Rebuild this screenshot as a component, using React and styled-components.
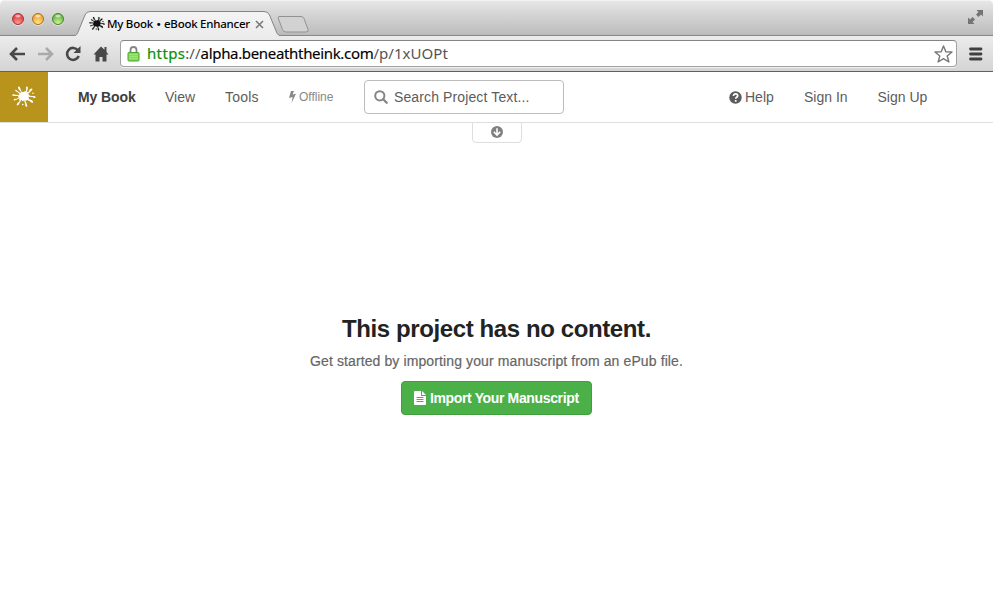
import React from "react";
import styled, { createGlobalStyle } from "styled-components";

const GlobalStyle = createGlobalStyle`
  * { box-sizing: border-box; }
  html, body { margin: 0; background: #fff; overflow: hidden; }
`;

const Window = styled.div`
  width: 993px;
  height: 609px;
  display: flex;
  flex-direction: column;
  overflow: hidden;
  background: #fff;
  font-family: "Liberation Sans", Arial, sans-serif;
  border-radius: 5px 5px 0 0;
`;

const TabStrip = styled.div`
  height: 36px;
  flex: none;
  display: flex;
  align-items: flex-start;
  background: linear-gradient(#e8e8e8 0, #dadada 10px, #bdbdbd 34px, #b4b4b4 35px);
  box-shadow: inset 0 -1px #898989, inset 0 1px #f2f2f2;
`;

const Lights = styled.div`
  display: flex;
  gap: 8px;
  padding: 13px 0 0 12px;
  width: 72px;
`;

const Light = styled.span`
  width: 12px;
  height: 12px;
  border-radius: 50%;
  border: 1px solid ${(p) => p.$edge};
  background:
    radial-gradient(ellipse 4px 2px at 50% 20%, rgba(255, 255, 255, 0.9), transparent),
    radial-gradient(circle at 50% 90%, ${(p) => p.$glow}, ${(p) => p.$color} 75%);
  box-shadow: 0 1px rgba(255, 255, 255, 0.5);
`;

const Tab = styled.div`
  position: relative;
  width: 204px;
  height: 36px;
  display: flex;
  align-items: center;
  padding: 12px 0 0 17px;
`;

const TabShape = styled.svg`
  position: absolute;
  inset: 0;
`;

const TabTitle = styled.span`
  position: relative;
  margin-left: 2px;
  width: 143px;
  white-space: nowrap;
  font: 500 11.5px/16px "Noto Sans", "Open Sans", sans-serif;
  letter-spacing: -0.25px;
  color: #000;
`;

const Bullet = styled.span`
  font-family: "DejaVu Sans", sans-serif;
  font-size: 10px;
`;

const Icon = styled.svg`
  position: relative;
  flex: none;
  display: block;
  margin-left: ${(p) => p.$left || 0}px;
  margin-top: ${(p) => p.$top || 0}px;
`;

const Toolbar = styled.div`
  height: 36px;
  flex: none;
  display: flex;
  align-items: center;
  padding: 0 10px 0 9px;
  background: linear-gradient(#ececec, #d4d4d4);
  border-bottom: 1px solid #626066;
`;

const AddressBar = styled.div`
  width: 837px;
  height: 27px;
  margin: 0 0 0 11px;
  padding: 0 3px 0 6px;
  display: flex;
  align-items: center;
  background: #fff;
  border: 1px solid #a0a0a0;
  border-top-color: #858585;
  border-radius: 4px;
  box-shadow: 0 1px #f1f1f1;
`;

const Url = styled.div`
  flex: 1;
  margin: -1px 0 0 7px;
  padding-bottom: 1px;
  white-space: nowrap;
  font: 15px/24px "Noto Sans", "Open Sans", sans-serif;
  letter-spacing: 0.05px;
  color: #555;
`;

const Scheme = styled.span`
  color: #0a910a;
  -webkit-text-stroke: 0.2px #0a910a;
  letter-spacing: 0.35px;
`;

const Host = styled.span`
  color: #000;
  -webkit-text-stroke: 0.15px #000;
  letter-spacing: -0.33px;
`;

const Navbar = styled.nav`
  height: 51px;
  flex: none;
  display: flex;
  align-items: center;
  border-bottom: 1px solid #dedede;
`;

const Brand = styled.div`
  width: 48px;
  height: 50px;
  margin-right: 30px;
  display: flex;
  align-items: center;
  justify-content: center;
  background: #b8941d;
`;

const NavItem = styled.span`
  width: ${(p) => p.$w}px;
  margin-right: 30px;
  display: flex;
  align-items: center;
  gap: 3px;
  white-space: nowrap;
  font-size: ${(p) => (p.$small ? 12 : 14)}px;
  font-weight: ${(p) => (p.$strong ? 700 : 400)};
  line-height: 20px;
  letter-spacing: ${(p) => p.$spacing || 0}px;
  color: ${(p) => (p.$strong ? "#404040" : p.$small ? "#888" : "#5c5c5c")};
`;

const SearchBox = styled.div`
  width: 200px;
  height: 34px;
  padding-left: 9px;
  display: flex;
  align-items: center;
  gap: 6px;
  margin-right: 165px;
  border: 1px solid #bdbdbd;
  border-radius: 4px;
  font-size: 14px;
  letter-spacing: 0.12px;
  color: #5c5c5c;
`;

const PullTab = styled.div`
  width: 50px;
  height: 21px;
  flex: none;
  margin: -1px 0 0 472px;
  display: flex;
  justify-content: center;
  padding: 4px 1px 0 0;
  background: #fff;
  border: 1px solid #dedede;
  border-radius: 0 0 4px 4px;
`;

const Empty = styled.main`
  display: flex;
  flex-direction: column;
  align-items: center;
  padding-top: 172px;
`;

const Heading = styled.h1`
  margin: 0;
  font-size: 24px;
  line-height: 28px;
  font-weight: 700;
  letter-spacing: -0.4px;
  color: #222;
  white-space: nowrap;
`;

const Lead = styled.p`
  margin: 8px 0 10px;
  font-size: 14px;
  line-height: 20px;
  letter-spacing: 0.11px;
  color: #666;
  -webkit-text-stroke: 0.2px #666;
  white-space: nowrap;
`;

const ImportButton = styled.button`
  width: 191px;
  height: 34px;
  padding: 0 0 0 12px;
  display: flex;
  align-items: center;
  gap: 4px;
  border: 1px solid #3fa03d;
  border-radius: 4px;
  background: #4bb047;
  color: #fff;
  font: 700 14px/20px "Liberation Sans", Arial, sans-serif;
  letter-spacing: -0.36px;
  white-space: nowrap;
`;

function Splat({ size, color, heavy }) {
  return (
    <Icon width={size} height={size} viewBox="0 0 24 24" fill={color} stroke={color} strokeWidth={heavy ? 0.3 : 0}>
      <path d="M7.500 8.500 9.600 6.800 11.500 6.900 13.200 6 14 7.200 16.200 6.700 16 9 17.800 10.300 16.500 11.800 17 14 15 14.400 14.300 16 12.600 15.200 10.500 16.300 9.500 15 7.200 15.500 7.400 13.300 5.800 12 7 10.800Z" />
      <path d="M10 8 8.400 3.700Q7.800 1.200 6.600 1.500T6.500 4.300ZM13.500 7 14.200 4.300Q13.300 1.800 14.800 1.600T15.700 4.500L14.500 7.500ZM15.500 8.500 17.200 5.800Q17.200 3.800 19.500 3.600T18.800 6.400L16 9ZM16.500 10.800 20.500 11Q23.700 10.600 23.600 12.200T20.300 12L16.500 11.700ZM15.500 13.500 18 14.400Q21.500 15.500 21 17.200T18.200 16.400L14.500 14.500ZM13 15 14.500 18.500Q16 21.700 14.500 21.800T13.200 18.500L12 15.500ZM9.500 14.500 7.600 18Q6.300 21.200 5 20.300T6.800 17L8.500 14.500ZM8.500 12.800 4.500 14.800Q2 16.200 1.700 14.900T4.300 13.900L7.500 12ZM7.500 10.700 3.500 10.900Q.3 11.500.2 10.100T3.500 9.700L8 10ZM8.500 9.500 5.200 7Q2.500 6.100 3.200 5.100T5.800 6.300L9 8.500Z" />
      <circle cx="10.800" cy="19.500" r=".8" /><circle cx="21" cy="8.200" r=".8" />
    </Icon>
  );
}

function Arrow({ flip, color, left }) {
  return (
    <Icon $left={left} width="17" height="16" viewBox="0 0 17 16" fill="none" stroke={color} strokeWidth="2.6">
      <path d={flip ? "M1 8h13M9 2l6 6-6 6" : "M16 8H3M8 2 2 8l6 6"} />
    </Icon>
  );
}

export default function App() {
  return (
    <>
      <GlobalStyle />
      <Window>
        <TabStrip>
          <Lights>
            <Light $color="#e0393e" $glow="#ff9a94" $edge="#a43336" />
            <Light $color="#eea22f" $glow="#ffe68a" $edge="#a9701f" />
            <Light $color="#67b443" $glow="#cbf794" $edge="#47832d" />
          </Lights>
          <Tab>
            <TabShape width="240" height="36" viewBox="0 0 240 36">
              <defs>
                <linearGradient id="tab" x2="0" y2="1">
                  <stop stopColor="#f4f4f4" /><stop offset="1" stopColor="#ececec" />
                </linearGradient>
              </defs>
              <path d="M0 36.500c4-.5 5-2 6-4.500l7-17q1.400-3.500 5-3.500h174q4 0 5.500 3.500l7 17c1 2.500 2.500 4 6 4.500" fill="url(#tab)" stroke="#858585" />
              <path d="M207 16.500h22q2 0 3 2l4 11q.8 2.500-2 2.500h-20q-2.500 0-3.500-2.500l-4-10.500q-.8-2.500.5-2.500Z" fill="#d2d2d2" stroke="#929292" />
            </TabShape>
            <Splat size={16} color="#111" heavy />
            <TabTitle>My Book <Bullet>•</Bullet> eBook Enhancer</TabTitle>
            <Icon $left={5} width="9" height="9" viewBox="0 0 9 9" stroke="#777" strokeWidth="1.500">
              <path d="m1 1 7 7m0-7-7 7" />
            </Icon>
          </Tab>
          <Icon $left={692} $top={10} width="16" height="15" viewBox="0 0 16 15" fill="#747474">
            <path d="M8.500 0H15v6.500l-2-2L10.500 7 8 4.500 10.500 2ZM0 7.500 2 9.500 4.500 7 7 9.500 4.500 12l2 2H0Z" />
          </Icon>
        </TabStrip>
        <Toolbar>
          <Arrow color="#484848" />
          <Arrow flip color="#aaa" left={11} />
          <Icon $left={11} width="16" height="16" viewBox="0 0 16 16">
            <path d="M13 4.500A6 6 0 1 0 13.700 10" fill="none" stroke="#484848" strokeWidth="2.600" />
            <path d="M15.500 0v7h-7Z" fill="#484848" />
          </Icon>
          <Icon $left={12} width="16" height="16" viewBox="0 0 16 16" fill="#484848">
            <path d="M8 .5 .5 8.500h2v7h4V11h3v4.500h4v-7h2L13.500 6V1h-2v2.700Z" />
          </Icon>
          <AddressBar>
            <Icon width="13" height="16" viewBox="0 0 13 16">
              <path d="M3.500 8V4a3 3 0 0 1 6 0V8" fill="none" stroke="#858585" strokeWidth="1.800" />
              <rect x="1" y="6.500" width="11" height="8.500" rx="1" fill="#83dc59" stroke="#4ca52d" />
              <path d="M2 8.500h9M2 10.500h9M2 12.500h9" stroke="#a7eb80" strokeWidth=".7" />
            </Icon>
            <Url><Scheme>https</Scheme>://<Host>alpha.beneaththeink.com</Host>/p/1xUOPt</Url>
            <Icon width="19" height="18" viewBox="0 0 19 18" fill="#fff" stroke="#777" strokeWidth="1.400" strokeLinejoin="round">
              <path d="m9.500 1 2.300 5.700 6.200.3-4.800 4 1.700 6-5.400-3.300L4.100 17l1.700-6L1 7l6.200-.3Z" />
            </Icon>
          </AddressBar>
          <Icon $left={12} width="14" height="14" viewBox="0 0 14 14" stroke="#404040" strokeWidth="2.800" strokeLinecap="round">
            <path d="M1.500 2h10.500M1.500 7h10.500M1.500 12h10.500" />
          </Icon>
        </Toolbar>
        <Navbar>
          <Brand><Splat size={24} color="#fff" /></Brand>
          <NavItem $w={57} $strong $spacing={-0.1}>My Book</NavItem>
          <NavItem $w={30}>View</NavItem>
          <NavItem $w={34} $spacing={0.2}>Tools</NavItem>
          <NavItem $w={45} $small>
            <Icon width="7" height="12" viewBox="0 0 7 12" fill="#888">
              <path d="M2 0h3L3.600 3.600 7 2.800 2.600 12l1-6L0 6.900Z" />
            </Icon>
            Offline
          </NavItem>
          <SearchBox>
            <Icon width="14" height="14" viewBox="0 0 14 14" fill="none" stroke="#858585" strokeWidth="2">
              <circle cx="5.800" cy="5.800" r="4.600" /><path d="m9.200 9.200 3.500 3.500" strokeWidth="2.300" strokeLinecap="round" />
            </Icon>
            Search Project Text...
          </SearchBox>
          <NavItem $w={45}>
            <Icon width="13" height="13" viewBox="0 0 13 13">
              <circle cx="6.500" cy="6.500" r="6.200" fill="#5c5c5c" />
              <path d="M4.500 4.900c0-2.700 4.200-2.500 4.200-.1 0 1.500-2 1.400-2 2.900M6.700 9v1.700" fill="none" stroke="#fff" strokeWidth="1.700" />
            </Icon>
            Help
          </NavItem>
          <NavItem $w={43.5}>Sign In</NavItem>
          <NavItem $w={51}>Sign Up</NavItem>
        </Navbar>
        <PullTab>
          <Icon $top={-1} width="12" height="12" viewBox="0 0 12 12">
            <circle cx="6" cy="6" r="6" fill="#808080" />
            <path d="M6 2.300v6.500M2.800 5.800 6 9l3.200-3.200" fill="none" stroke="#fff" strokeWidth="1.600" />
          </Icon>
        </PullTab>
        <Empty>
          <Heading>This project has no content.</Heading>
          <Lead>Get started by importing your manuscript from an ePub file.</Lead>
          <ImportButton>
            <Icon width="12" height="14" viewBox="0 0 12 14">
              <path d="M1 0h6v5h5v8q0 1-1 1H1q-1 0-1-1V1q0-1 1-1M8 0l4 4H8Z" fill="#fff" />
              <path d="M2.500 6.500h7M2.500 8.500h7M2.500 10.500h7" stroke="#4bb047" />
            </Icon>
            Import Your Manuscript
          </ImportButton>
        </Empty>
      </Window>
    </>
  );
}
